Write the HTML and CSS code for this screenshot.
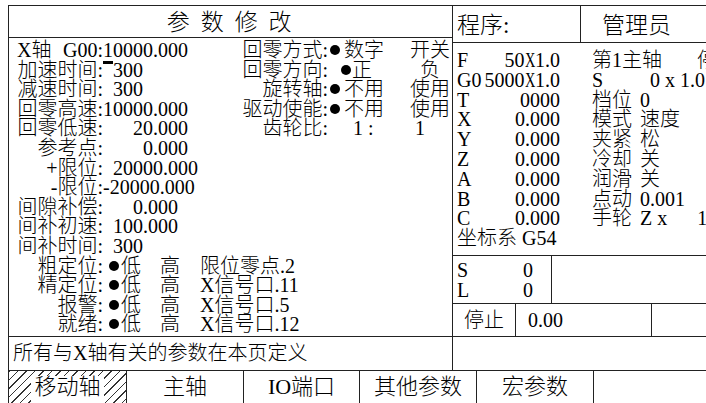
FILE: index.html
```html
<!DOCTYPE html>
<html lang="zh">
<head>
<meta charset="utf-8">
<title>参数修改</title>
<link rel="stylesheet" href="styles.css">
</head>
<body>
<div class="screen">
  <div class="top">
    <section class="left">
      <div class="title">参 数 修 改</div>
      <div class="params">
        <div class="row a"><span class="lbl split"><span>X轴</span><span>G00:</span></span><span class="val"><span class="cursor">1</span>0000.000</span><span class="lbl">回零方式:</span><span class="opt"><i class="dot"></i>数字</span><span class="opt2">开关</span></div>
        <div class="row a"><span class="lbl">加速时间:</span><span class="val i1">300</span><span class="lbl">回零方向:</span><span class="opt"><i class="dot far"></i>正</span><span class="opt2 i1">负</span></div>
        <div class="row a"><span class="lbl">减速时间:</span><span class="val i1">300</span><span class="lbl">旋转轴:</span><span class="opt"><i class="dot"></i>不用</span><span class="opt2">使用</span></div>
        <div class="row a"><span class="lbl">回零高速:</span><span class="val">10000.000</span><span class="lbl">驱动使能:</span><span class="opt"><i class="dot"></i>不用</span><span class="opt2">使用</span></div>
        <div class="row a"><span class="lbl">回零低速:</span><span class="val i3">20.000</span><span class="lbl">齿轮比:</span><span class="opt ratio">1 :</span><span class="opt2 half">1</span></div>
        <div class="row a"><span class="lbl">参考点:</span><span class="val i4">0.000</span></div>
        <div class="row a"><span class="lbl">+限位:</span><span class="val i1">20000.000</span></div>
        <div class="row a"><span class="lbl">-限位:</span><span class="val">-20000.000</span></div>
        <div class="row a"><span class="lbl">间隙补偿:</span><span class="val i3">0.000</span></div>
        <div class="row a"><span class="lbl">间补初速:</span><span class="val i1">100.000</span></div>
        <div class="row a"><span class="lbl">间补时间:</span><span class="val i1">300</span></div>
        <div class="row b"><span class="lbl">粗定位:</span><span class="lv"><i class="dot near"></i>低</span><span>高</span><span>限位零点.2</span></div>
        <div class="row b"><span class="lbl">精定位:</span><span class="lv"><i class="dot near"></i>低</span><span>高</span><span>X信号口.11</span></div>
        <div class="row b"><span class="lbl">报警:</span><span class="lv"><i class="dot near"></i>低</span><span>高</span><span>X信号口.5</span></div>
        <div class="row b"><span class="lbl">就绪:</span><span class="lv"><i class="dot near"></i>低</span><span>高</span><span>X信号口.12</span></div>
      </div>
    </section>
    <section class="right">
      <div class="rhead">
        <div class="prog">程序:</div>
        <div class="admin">管理员</div>
      </div>
      <div class="rdata">
        <div class="ax"><span>F</span><span>50<span class="mx">X</span>1.0</span></div>
        <div class="st">第1主轴<span class="stop">停</span></div>
        <div class="ax"><span>G0</span><span>5000<span class="mx">X</span>1.0</span></div>
        <div class="st"><span class="k">S</span><span class="i1">0 x 1.0</span></div>
        <div class="ax"><span>T</span><span>0000</span></div>
        <div class="st"><span class="k">档位</span><span>0</span></div>
        <div class="ax"><span>X</span><span>0.000</span></div>
        <div class="st"><span class="k">模式</span><span>速度</span></div>
        <div class="ax"><span>Y</span><span>0.000</span></div>
        <div class="st"><span class="k">夹紧</span><span>松</span></div>
        <div class="ax"><span>Z</span><span>0.000</span></div>
        <div class="st"><span class="k">冷却</span><span>关</span></div>
        <div class="ax"><span>A</span><span>0.000</span></div>
        <div class="st"><span class="k">润滑</span><span>关</span></div>
        <div class="ax"><span>B</span><span>0.000</span></div>
        <div class="st"><span class="k">点动</span><span>0.001</span></div>
        <div class="ax"><span>C</span><span>0.000</span></div>
        <div class="st"><span class="k">手轮</span><span>Z x</span><span class="wheel">1</span></div>
        <div class="coord">坐标系 G54</div>
      </div>
      <div class="sl">
        <div class="slbox">
          <span>S</span><span>0</span>
          <span>L</span><span>0</span>
        </div>
        <div></div>
      </div>
      <div class="status">
        <div class="cell center">停止</div>
        <div class="cell speed">0.00</div>
        <div></div>
      </div>
    </section>
  </div>
  <div class="msgrow">
    <div class="msg">所有与X轴有关的参数在本页定义</div>
    <div></div>
  </div>
  <div class="tabs">
    <div class="tab active"><span class="tablbl">移动轴</span></div>
    <div class="tab">主轴</div>
    <div class="tab">IO端口</div>
    <div class="tab">其他参数</div>
    <div class="tab">宏参数</div>
    <div class="tab"></div>
  </div>
</div>
</body>
</html>
```

FILE: styles.css
```css
* { box-sizing: border-box; margin: 0; padding: 0; }
html, body { width: 706px; height: 403px; overflow: hidden; background: #fff; }
body {
  font-family: "Liberation Serif", "Noto Sans CJK SC", serif;
  font-size: 20px;
  font-weight: 300;
  color: #000;
}
.screen {
  margin: 5px 0 0 8px;
  width: 760px;
  border-top: 1px solid #222;
  border-left: 1px solid #222;
}
.top { display: grid; grid-template-columns: 444px 1fr; height: 331px; }

/* left panel */
.left { border-right: 1px solid #222; border-bottom: 1px solid #222; display: flex; flex-direction: column; }
.title {
  height: 32px;
  border-bottom: 1px solid #222;
  font-size: 23px;
  text-align: center;
  line-height: 29px;
  padding-top: 2px;
  letter-spacing: 2.6px;
}
.params { flex: 1; padding: 3px 0 0 8px; }
.row { display: grid; height: 19.6px; line-height: 19.6px; white-space: nowrap; }
.row.a { grid-template-columns: 86px 127px 98px 82px 1fr; }
.row.b { grid-template-columns: 86px 57px 40px 1fr; }
.lbl { text-align: right; }
.lbl.split { display: flex; justify-content: space-between; }
.i1 { padding-left: 1ch; }
.i3 { padding-left: 3ch; }
.i4 { padding-left: 4ch; }
.half { padding-left: 5px; }
.cursor { border-bottom: 3px solid #000; }
.dot {
  display: inline-block;
  width: 10px;
  height: 10px;
  border-radius: 50%;
  background: #000;
  margin: 0 4px 0 2px;
  vertical-align: 2px;
}
.dot.far { margin-left: 13px; margin-right: 1px; }
.dot.near { margin-left: 6px; margin-right: 2px; }
.ratio { padding-left: 25px; }

/* right panel */
.right { display: grid; grid-template-rows: 37px 213px 48px 33px; }
.rhead { display: grid; grid-template-columns: 128px 1fr; border-bottom: 1px solid #222; font-size: 23px; line-height: 33px; padding-top: 3px; }
.prog { border-right: 1px solid #222; padding-left: 4px; margin-top: -3px; padding-top: 3px; }
.admin { padding-left: 21px; }
.rdata {
  border-bottom: 1px solid #222;
  padding: 8px 0 0 4px;
  display: grid;
  grid-template-columns: 103px 1fr;
  column-gap: 32px;
  grid-auto-rows: 19.8px;
  line-height: 19.8px;
  white-space: nowrap;
}
.ax { display: flex; justify-content: space-between; }
.mx { display: inline-block; transform: scaleX(0.72); margin: 0 -2px; }
.st .k { display: inline-block; width: 48px; }
.stop { margin-left: 35px; }
.wheel { margin-left: 30px; }
.coord { grid-column: 1 / -1; }
.sl { display: grid; grid-template-columns: 99px 1fr; border-bottom: 1px solid #222; }
.slbox {
  border-right: 1px solid #222;
  padding: 4px 0 0 4px;
  display: grid;
  grid-template-columns: 66px 1fr;
  grid-auto-rows: 20px;
  line-height: 20px;
  align-content: start;
}
.status { display: grid; grid-template-columns: 63px 136px 1fr; border-bottom: 1px solid #222; line-height: 32px; }
.cell { border-right: 1px solid #222; }
.center { text-align: center; }
.speed { padding-left: 12px; }

/* message row */
.msgrow { display: grid; grid-template-columns: 444px 1fr; height: 34px; border-bottom: 1px solid #222; }
.msg { border-right: 1px solid #222; padding-left: 4px; line-height: 33px; }

/* tabs */
.tabs { display: grid; grid-template-columns: 118px 117px 116px 117px 117px 1fr; height: 40px; font-size: 22px; }
.tab { border-right: 1px solid #222; text-align: center; line-height: 32px; }
.tab.active {
  display: flex;
  justify-content: center;
  padding-top: 5px;
  background: repeating-linear-gradient(135deg, #333 0 1px, #fff 1px 6px);
}
.tablbl { background: #fff; padding: 0 3px; line-height: 22px; height: 35px; }
```
